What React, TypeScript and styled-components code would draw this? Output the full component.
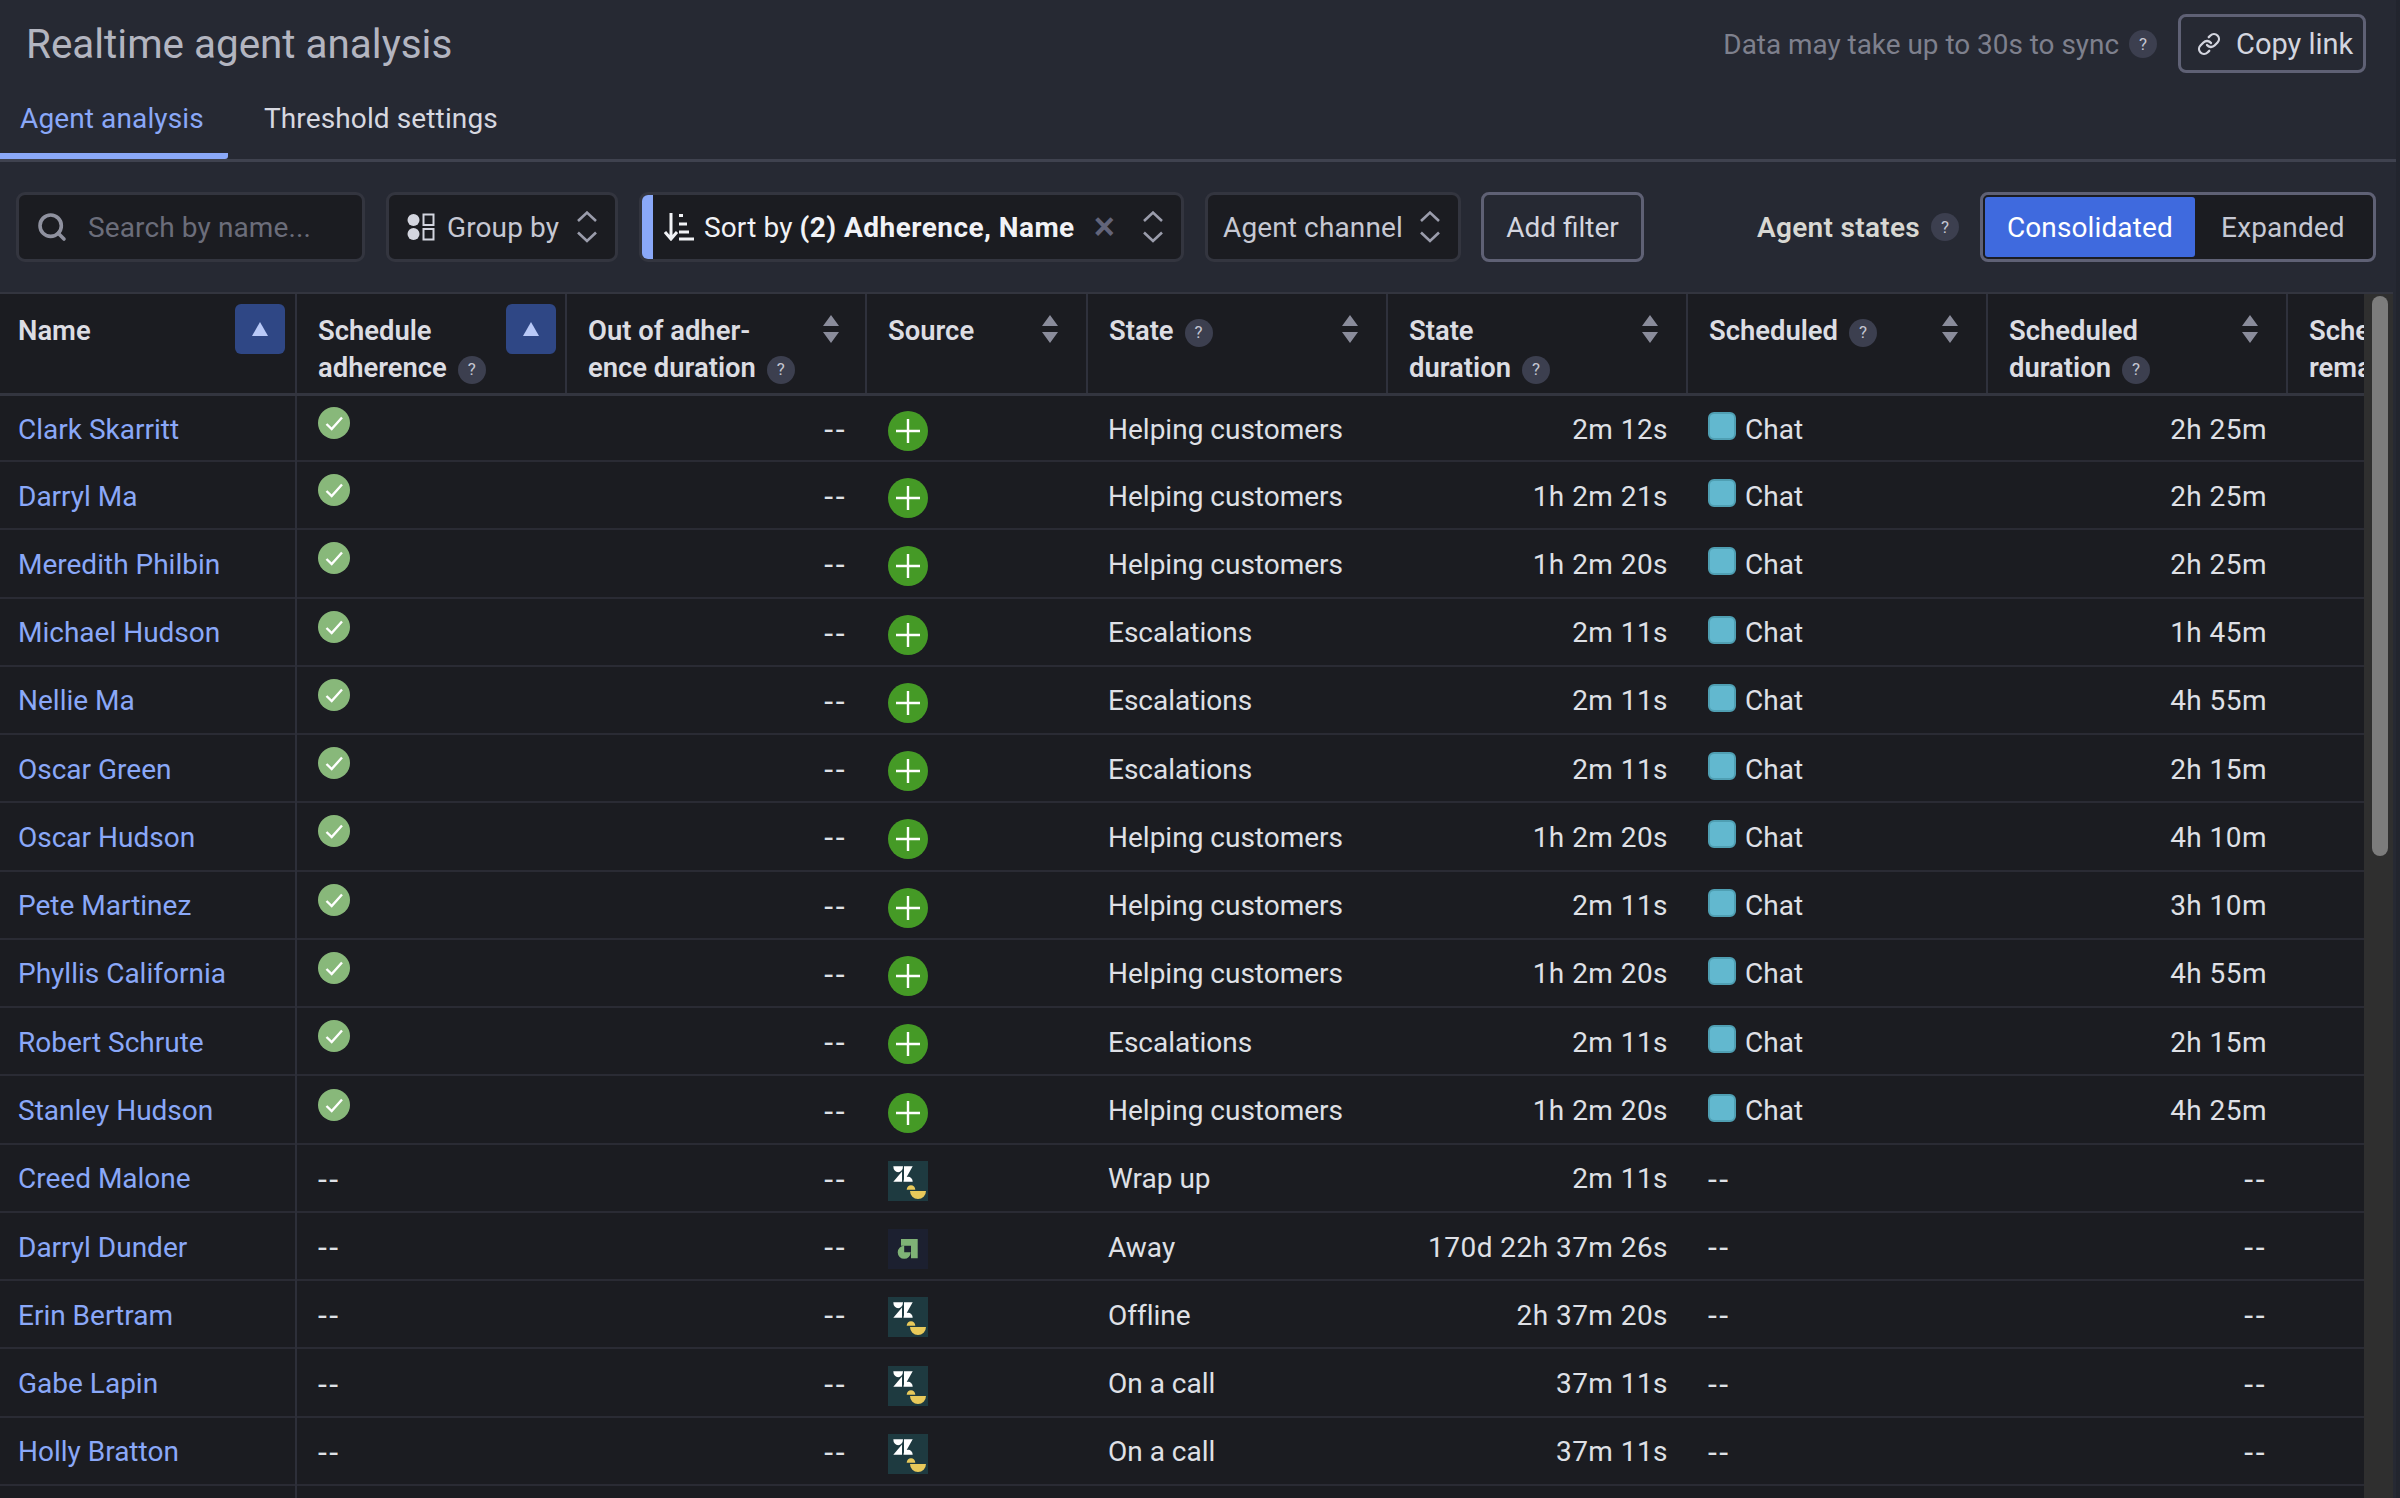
import React from "react";
import styled, { createGlobalStyle } from "styled-components";
import { Search, Link } from "lucide-react";

const Global = createGlobalStyle`
  html, body { margin: 0; padding: 0; background: #22252e; }
  body { font-family: Roboto, "Noto Sans", sans-serif; width: 2400px; height: 1498px; overflow: hidden; font-variant-ligatures: none; }
  * { box-sizing: border-box; }
`;

const Page = styled.div`
  width: 2396px; height: 1498px; background: #262933; display: flex; flex-direction: column; overflow: hidden;
`;
const Top = styled.header`
  height: 88px; flex: none; display: flex; align-items: flex-start; justify-content: space-between;
`;
const Title = styled.h1`
  margin: 22px 0 0 26px; font-size: 40.4px; line-height: 46px; font-weight: 400; color: #b3b5c0;
`;
const TopRight = styled.div`
  display: flex; align-items: center; margin: 14px 30px 0 0; height: 59px;
`;
const SyncNote = styled.span`
  font-size: 27.900px; color: #7e808d; margin: 2px 10px 0 0;
`;
const CopyBtn = styled.button`
  width: 188px; height: 59px; margin-left: 21px; border: 3px solid #5f6175; border-radius: 8px; background: transparent;
  color: #d3d5df; font: 400 29px Roboto, sans-serif; display: flex; align-items: center; padding: 0 0 0 16px; gap: 15px;
`;
const Tabs = styled.nav`
  height: 74px; flex: none; border-bottom: 3px solid #3f424f; display: flex; align-items: flex-start;
`;
const Tab = styled.div<{ $active?: boolean }>`
  width: ${p => (p.$active ? "228px" : "auto")}; height: 71px; padding: ${p => (p.$active ? "12px 0 0 20px" : "12px 0 0 36px")};
  font-size: 28px; line-height: 38px; letter-spacing: .12px; color: ${p => (p.$active ? "#8aa8f8" : "#d7d8e0")};
  border-bottom: ${p => (p.$active ? "6px solid #8aa8f8" : "none")};
  border-bottom-right-radius: 3px;
`;
const Toolbar = styled.div`
  height: 130px; flex: none; display: flex; align-items: center; padding: 0 20px 0 16px; letter-spacing: .12px;
`;
const Control = styled.div<{ $w: number; $ml?: number }>`
  width: ${p => p.$w}px; margin-left: ${p => p.$ml ?? 0}px; height: 70px; flex: none; background: #1b1c21; border: 3px solid #33353f; border-radius: 9px;
  display: flex; align-items: center; font-size: 28px; color: #d3d5df; overflow: hidden;
`;
const SearchIconWrap = styled.span`
  margin-left: 17px; display: flex; color: #8f919f;
`;
const Placeholder = styled.span`
  margin-left: 20px; color: #6b6d7a;
`;
const GroupLabel = styled.span`
  margin-left: 12px; color: #c6c8d3;
`;
const Chevrons = styled.svg`
  flex: none; margin-left: auto; margin-right: 17px;
`;
const SortStrip = styled.span`
  width: 11px; align-self: stretch; background: #8aa8f8; flex: none;
`;
const SortLabel = styled.span`
  margin-left: 10px; color: #f1f2f6; white-space: nowrap;
  b { font-weight: 700; letter-spacing: .45px; }
`;
const ClearX = styled.span`
  margin-left: 19px; color: #62647a; font-size: 40px; font-weight: 500; line-height: 1;
`;
const ChannelLabel = styled.span`
  margin-left: 15px; color: #c6c8d3; white-space: nowrap;
`;
const AddFilter = styled.button`
  margin-left: 20px; width: 163px; height: 70px; flex: none; background: transparent; border: 3px solid #5f6175; border-radius: 8px;
  color: #d3d5df; font: 400 28px Roboto, sans-serif; padding: 0;
`;
const StatesGroup = styled.div`
  margin-left: auto; display: flex; align-items: center;
`;
const StatesLabel = styled.span`
  font-size: 28px; font-weight: 600; color: #d8d8d3; margin-right: 11px; letter-spacing: .3px;
`;
const Segmented = styled.div`
  margin-left: 21px; width: 396px; height: 70px; border: 3px solid #5f6175; border-radius: 8px; padding: 2px; display: flex; background: #1b1c21;
`;
const Segment = styled.div<{ $on?: boolean }>`
  height: 60px; display: flex; align-items: center; justify-content: center; font-size: 28px; border-radius: 3px;
  width: ${p => (p.$on ? "212px" : "178px")};
  background: ${p => (p.$on ? "#3f6ade" : "transparent")};
  color: ${p => (p.$on ? "#ffffff" : "#c6c8d3")};
`;
const TableArea = styled.div`
  flex: 1; min-height: 0; display: flex; border-top: 2px solid #33353f; margin-right: 3px;
`;
const TableClip = styled.div`
  width: 2364px; flex: none; overflow: hidden; background: #1b1c21;
`;
const HeaderRow = styled.div`
  display: grid; grid-template-columns: 297px 270px 300px 221px 300px 300px 300px 300px 300px; width: 2588px; height: 102px; border-bottom: 3px solid #33353f;
`;
const HeadCell = styled.div<{ $pr?: number; $pl?: number }>`
  display: flex; justify-content: space-between; align-items: flex-start; padding: 19px ${p => p.$pr ?? 29}px 0 ${p => p.$pl ?? 21}px;
  border-right: 2px solid #2f313c; height: 99px; font-size: 27.400px; line-height: 37px; font-weight: 600; color: #dcdde3;
`;
const ActiveSort = styled.span`
  width: 50px; height: 50px; flex: none; margin-top: -9px; background: #2f4785; border-radius: 6px; display: flex; align-items: center; justify-content: center;
`;
const SortIcon = styled.svg`
  flex: none; margin-top: 2px;
`;
const HelpBadge = styled.span`
  display: inline-flex; width: 28px; height: 28px; border-radius: 50%; background: #3c3f4f; color: #c4c6d2; font-size: 17px; font-weight: 400;
  align-items: center; justify-content: center; vertical-align: 2px; flex: none;
`;
const HeadHelp = styled(HelpBadge)`
  margin-left: 11px;
`;
const Row = styled.div<{ $h: number }>`
  display: grid; grid-template-columns: 297px 270px 300px 221px 300px 300px 300px 300px 300px; width: 2588px; height: ${p => p.$h}px;
  border-bottom: 2px solid #2a2b34; font-size: 28px; color: #dfe0e6;
`;
const Cell = styled.div<{ $right?: boolean; $pad?: number; $wide?: boolean }>`
  display: flex; align-items: center; justify-content: ${p => (p.$right ? "flex-end" : "flex-start")};
  padding: 2px ${p => p.$pad ?? 20}px 0; white-space: nowrap; letter-spacing: ${p => (p.$wide ? ".45px" : "0")};
`;
const NameCell = styled(Cell)`
  color: #8aa8f8; padding: 0 0 0 18px; border-right: 2px solid #2d2f39; margin-bottom: -2px; width: 297px;
`;
const Dash = styled.span`
  font-size: 32px; letter-spacing: 2.500px; line-height: 1;
`;
const CheckWrap = styled.svg`
  margin-bottom: 12px; flex: none;
`;
const SourceIcon = styled.svg`
  margin-top: 4px; flex: none;
`;
const ChatSwatch = styled.span`
  width: 28px; height: 28px; border-radius: 6px; background: #62b8cf; border: 2px solid #4f9fb3; margin: 0 9px 6px 0; flex: none;
`;
const Track = styled.div`
  width: 29px; flex: none; background: #2f2f2f; padding: 2px 5px 0 8px;
`;
const Thumb = styled.div`
  width: 16px; height: 560px; background: #7c7c7c; border-radius: 8px;
`;
const GroupIcon = styled.svg`
  margin-left: 18px; flex: none;
`;
const SortGlyph = styled.svg`
  margin-left: 11px; flex: none;
`;

const Chev = () => (
  <Chevrons width="22" height="32" viewBox="0 0 22 32" fill="none" stroke="#9a9cab" strokeWidth="2.6">
    <path d="M2 10 11 1.6 20 10M2 21.500 11 30 20 21.500" />
  </Chevrons>
);
const SortNeutral = () => (
  <SortIcon width="16" height="28" viewBox="0 0 16 28" fill="#8a8c9b">
    <path d="M8 0 16 11H0ZM0 17H16L8 28Z" />
  </SortIcon>
);
const SortUp = () => (
  <ActiveSort>
    <svg width="16" height="14" viewBox="0 0 16 14" fill="#b9c9f7"><path d="M8 0 16 14H0Z" /></svg>
  </ActiveSort>
);
const Check = () => (
  <CheckWrap width="32" height="32" viewBox="0 0 32 32">
    <circle cx="16" cy="16" r="16" fill="#88b87a" />
    <path d="M8.500 17 13.700 22 24 10.500" fill="none" stroke="#fff" strokeWidth="2.400" />
  </CheckWrap>
);
const Plus = () => (
  <SourceIcon width="40" height="40" viewBox="0 0 40 40">
    <circle cx="20" cy="20" r="20" fill="#459a26" />
    <path d="M20 8V32M8 20H32" stroke="#fff" strokeWidth="2.400" fill="none" />
  </SourceIcon>
);
const Zen = () => (
  <SourceIcon width="40" height="40" viewBox="0 0 40 40">
    <rect width="40" height="40" fill="#1e3a40" />
    <path fill="#fff" d="M5.300 5.300H15A4.800 6 0 0 1 5.300 5.300ZM16 5.300H24.700L16 20.700ZM5.300 20.700 14 10.500V20.700ZM15.500 20.700A4.600 5 0 0 1 24.700 20.700Z" />
    <path fill="#e8c95a" d="M18.700 28.700A4.300 4.500 0 0 1 27.300 28.700ZM22 30H38A8 8 0 0 1 22 30Z" />
  </SourceIcon>
);
const Amp = () => (
  <SourceIcon width="40" height="40" viewBox="0 0 40 40">
    <rect width="40" height="40" fill="#1c2030" />
    <path fill="#7fb276" d="M13 10H29.700V29.300H23V16.700H13ZM16.200 23.300V16.800A6.500 6.500 0 1 0 22.700 23.300Z" />
  </SourceIcon>
);

type R = [string, boolean, string, string, string, string, string];
const H = "Helping customers", E = "Escalations";
const rows: R[] = [
  ["Clark Skarritt", true, "plus", H, "2m 12s", "Chat", "2h 25m"],
  ["Darryl Ma", true, "plus", H, "1h 2m 21s", "Chat", "2h 25m"],
  ["Meredith Philbin", true, "plus", H, "1h 2m 20s", "Chat", "2h 25m"],
  ["Michael Hudson", true, "plus", E, "2m 11s", "Chat", "1h 45m"],
  ["Nellie Ma", true, "plus", E, "2m 11s", "Chat", "4h 55m"],
  ["Oscar Green", true, "plus", E, "2m 11s", "Chat", "2h 15m"],
  ["Oscar Hudson", true, "plus", H, "1h 2m 20s", "Chat", "4h 10m"],
  ["Pete Martinez", true, "plus", H, "2m 11s", "Chat", "3h 10m"],
  ["Phyllis California", true, "plus", H, "1h 2m 20s", "Chat", "4h 55m"],
  ["Robert Schrute", true, "plus", E, "2m 11s", "Chat", "2h 15m"],
  ["Stanley Hudson", true, "plus", H, "1h 2m 20s", "Chat", "4h 25m"],
  ["Creed Malone", false, "zen", "Wrap up", "2m 11s", "", ""],
  ["Darryl Dunder", false, "amp", "Away", "170d 22h 37m 26s", "", ""],
  ["Erin Bertram", false, "zen", "Offline", "2h 37m 20s", "", ""],
  ["Gabe Lapin", false, "zen", "On a call", "37m 11s", "", ""],
  ["Holly Bratton", false, "zen", "On a call", "37m 11s", "", ""],
];

export default function App() {
  return (
    <Page>
      <Global />
      <Top>
        <Title>Realtime agent analysis</Title>
        <TopRight>
          <SyncNote>Data may take up to 30s to sync</SyncNote>
          <HelpBadge>?</HelpBadge>
          <CopyBtn><Link size={24} strokeWidth={2.3} />Copy link</CopyBtn>
        </TopRight>
      </Top>
      <Tabs>
        <Tab $active>Agent analysis</Tab>
        <Tab>Threshold settings</Tab>
      </Tabs>
      <Toolbar>
        <Control $w={349}>
          <SearchIconWrap><Search size={32} strokeWidth={2.7} /></SearchIconWrap>
          <Placeholder>Search by name...</Placeholder>
        </Control>
        <Control $w={232} $ml={21}>
          <GroupIcon width="28" height="28" viewBox="0 0 28 28">
            <circle cx="6.500" cy="7" r="6" fill="#d3d5df" />
            <circle cx="6.500" cy="21" r="6" fill="#d3d5df" />
            <path d="M16.500 1.500H26.500V12H16.500ZM16.500 16H26.500V26.500H16.500Z" fill="none" stroke="#d3d5df" strokeWidth="2" />
          </GroupIcon>
          <GroupLabel>Group by</GroupLabel>
          <Chev />
        </Control>
        <Control $w={545} $ml={21}>
          <SortStrip />
          <SortGlyph width="30" height="28" viewBox="0 0 30 28" fill="none" stroke="#f1f2f6" strokeWidth="3">
            <path d="M7 0V25M1 19 7 26 13 19" />
            <path d="M14 2.500H18M14 11H22M14 19H24M14 26H29" transform="translate(1 0)" />
          </SortGlyph>
          <SortLabel>Sort by <b>(2) Adherence, Name</b></SortLabel>
          <ClearX>×</ClearX>
          <Chev />
        </Control>
        <Control $w={256} $ml={21}>
          <ChannelLabel>Agent channel</ChannelLabel>
          <Chev />
        </Control>
        <AddFilter>Add filter</AddFilter>
        <StatesGroup>
          <StatesLabel>Agent states</StatesLabel>
          <HelpBadge>?</HelpBadge>
          <Segmented>
            <Segment $on>Consolidated</Segment>
            <Segment>Expanded</Segment>
          </Segmented>
        </StatesGroup>
      </Toolbar>
      <TableArea>
        <TableClip>
          <HeaderRow>
            <HeadCell $pl={18} $pr={10}><span>Name</span><SortUp /></HeadCell>
            <HeadCell $pr={9}><span>Schedule<br />adherence<HeadHelp>?</HeadHelp></span><SortUp /></HeadCell>
            <HeadCell $pr={26}><span>Out of adher-<br />ence duration<HeadHelp>?</HeadHelp></span><SortNeutral /></HeadCell>
            <HeadCell $pr={28}><span>Source</span><SortNeutral /></HeadCell>
            <HeadCell $pr={28}><span>State<HeadHelp>?</HeadHelp></span><SortNeutral /></HeadCell>
            <HeadCell $pr={28}><span>State<br />duration<HeadHelp>?</HeadHelp></span><SortNeutral /></HeadCell>
            <HeadCell $pr={28}><span>Scheduled<HeadHelp>?</HeadHelp></span><SortNeutral /></HeadCell>
            <HeadCell $pr={28}><span>Scheduled<br />duration<HeadHelp>?</HeadHelp></span><SortNeutral /></HeadCell>
            <HeadCell><span>Scheduled<br />remaining</span></HeadCell>
          </HeaderRow>
          {rows.map((r, i) => (
            <Row key={r[0]} $h={i === 0 ? 66 : 68.27}>
              <NameCell>{r[0]}</NameCell>
              <Cell $pad={21}>{r[1] ? <Check /> : <Dash>--</Dash>}</Cell>
              <Cell $right><Dash>--</Dash></Cell>
              <Cell $pad={21}>{r[2] === "plus" ? <Plus /> : r[2] === "zen" ? <Zen /> : <Amp />}</Cell>
              <Cell>{r[3]}</Cell>
              <Cell $right $wide>{r[4]}</Cell>
              <Cell>{r[5] ? <><ChatSwatch />{r[5]}</> : <Dash>--</Dash>}</Cell>
              <Cell $right $pad={21} $wide>{r[6] || <Dash>--</Dash>}</Cell>
              <Cell />
            </Row>
          ))}
          <Row $h={68}><NameCell /></Row>
        </TableClip>
        <Track><Thumb /></Track>
      </TableArea>
    </Page>
  );
}
